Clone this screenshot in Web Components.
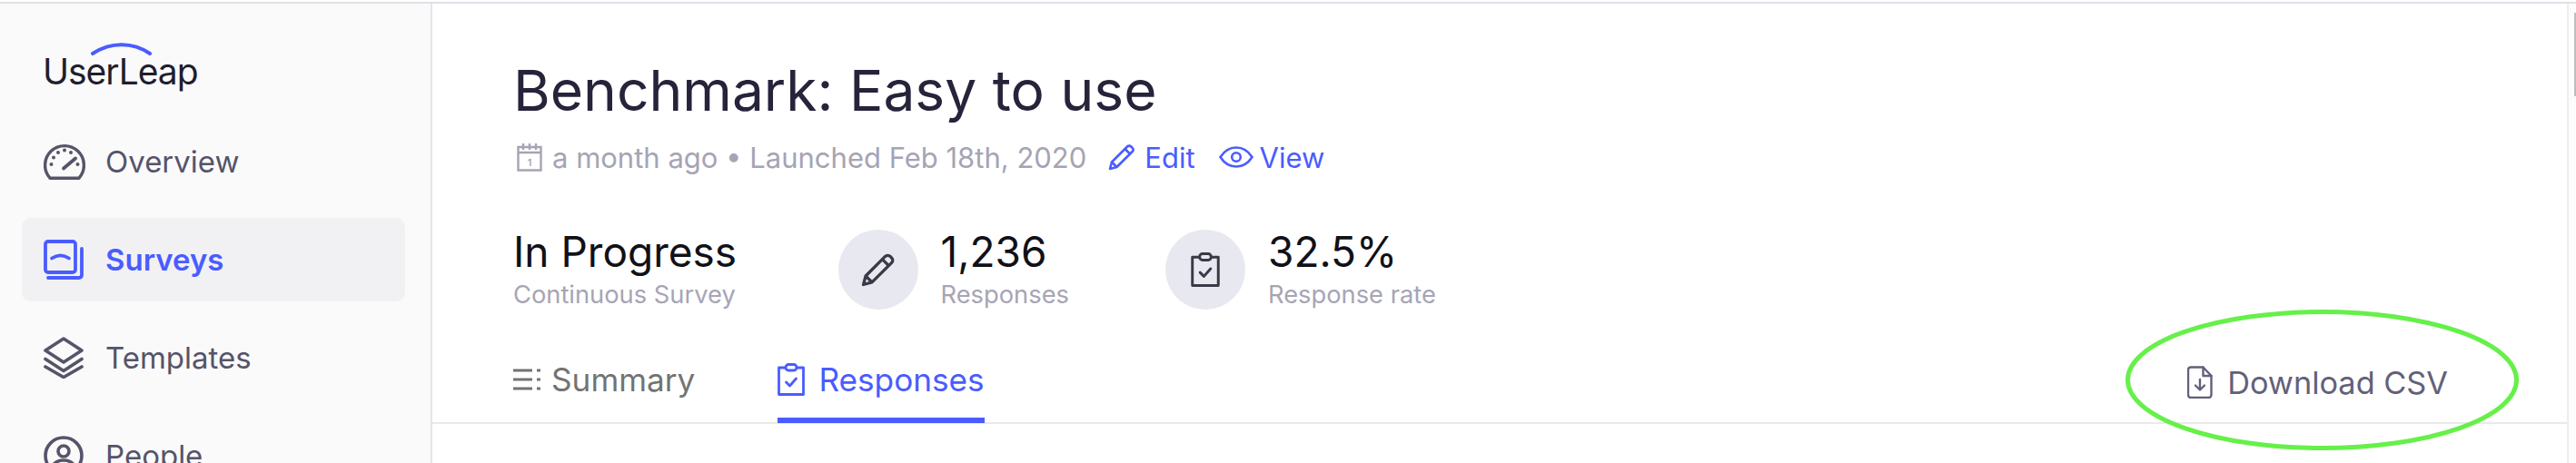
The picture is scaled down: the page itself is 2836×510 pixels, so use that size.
<!DOCTYPE html>
<html>
<head>
<meta charset="utf-8">
<title>Benchmark: Easy to use</title>
<style>
  html, body { margin: 0; height: 510px; overflow: hidden; background: #fff; font-family: Inter, "Liberation Sans", sans-serif; }
</style>
</head>
<body>
<app-shell>
  <side-nav slot="side">
    <nav-item icon="gauge">Overview</nav-item>
    <nav-item icon="surveys" active>Surveys</nav-item>
    <nav-item icon="layers">Templates</nav-item>
    <nav-item icon="person">People</nav-item>
  </side-nav>
  <survey-head>
    <span slot="title">Benchmark: Easy to use</span>
    <span slot="meta">a month ago • Launched Feb 18th, 2020</span>
    <stat-item slot="stats" value="In Progress" label="Continuous Survey"></stat-item>
    <stat-item slot="stats" icon="pencil" value="1,236" label="Responses"></stat-item>
    <stat-item slot="stats" icon="clipboard" value="32.5%" label="Response rate"></stat-item>
  </survey-head>
  <tab-bar>
    <tab-link icon="list">Summary</tab-link>
    <tab-link icon="clipboard" active>Responses</tab-link>
    <download-link slot="end">Download CSV</download-link>
  </tab-bar>
</app-shell>
<script>
  const ICONS = {
    gauge: `<svg width="46" height="40" viewBox="0 0 46 40" fill="none" stroke="currentColor" stroke-width="3.4" stroke-linecap="round"><path d="M7 38.2h32M7 38.2A21.4 21.4 0 1 1 39 38.2"/><path d="M22 27.500L35 16.500" stroke-width="3.800"/><g fill="currentColor" stroke="none"><circle cx="8.500" cy="23" r="2"/><circle cx="11" cy="15.500" r="2"/><circle cx="16" cy="10" r="2"/><circle cx="23" cy="7.500" r="2"/><circle cx="30" cy="10" r="2"/><circle cx="37.500" cy="23" r="2"/></g></svg>`,
    surveys: `<svg width="44" height="44" viewBox="0 0 44 44" fill="none" stroke="currentColor" stroke-width="3.800" stroke-linecap="round" stroke-linejoin="round"><rect x="2" y="2" width="33" height="34" rx="3"/><path d="M42 10v29a3 3 0 0 1-3 3H5"/><path d="M9 20.500c6-4 13-4 19 0"/></svg>`,
    layers: `<svg width="44" height="46" viewBox="0 0 44 46" fill="none" stroke="currentColor" stroke-width="3.600" stroke-linejoin="round" stroke-linecap="round"><path d="M22 2L42 15 22 28 2 15z"/><path d="M2 24.500L22 37.500 42 24.500"/><path d="M2 33L22 44.500 42 33"/></svg>`,
    person: `<svg width="44" height="44" viewBox="0 0 44 44" fill="none" stroke="currentColor" stroke-width="3.600"><circle cx="22" cy="22" r="20"/><circle cx="22" cy="17" r="6"/><path d="M9 36c2-7 7-9 13-9s11 2 13 9"/></svg>`,
    calendar: `<svg width="28" height="32" viewBox="0 0 28 32" fill="none" stroke="currentColor" stroke-width="2.400"><path d="M1.500 5h25v25.500h-25zM1.500 11h25"/><path d="M7 1v7M14 1v7M21 1v7"/><text x="14" y="26" text-anchor="middle" font-family="Inter, sans-serif" font-size="11" font-weight="600" fill="currentColor" stroke="none">1</text></svg>`,
    pencil: `<svg width="30" height="30" viewBox="0 0 30 30" fill="none" stroke="currentColor" stroke-width="2.600" stroke-linejoin="round"><path d="M21 3.500a3 3 0 0 1 4.300 0l1.300 1.300a3 3 0 0 1 0 4.200L9.500 26 2 28l2-7.500z"/><path d="M4 20.500l5.500 5.500M18.500 6l5.500 5.500"/></svg>`,
    eye: `<svg width="38" height="24" viewBox="0 0 38 24" fill="none" stroke="currentColor" stroke-width="2.600"><path d="M1.500 12C6 5 12 1.500 19 1.500S32 5 36.500 12C32 19 26 22.500 19 22.500S6 19 1.500 12z"/><circle cx="19" cy="12" r="4.800"/></svg>`,
    clipboard: `<svg width="30" height="36" viewBox="0 0 30 36" fill="none" stroke="currentColor" stroke-width="2.800" stroke-linejoin="round" stroke-linecap="round"><path d="M9 5H1.500v29.500h27V5H21"/><rect x="9" y="1.500" width="12" height="6.500" rx="3"/><path d="M9.500 21l4 4 7-8"/></svg>`,
    list: `<svg width="32" height="26" viewBox="0 0 32 26" fill="none" stroke="currentColor" stroke-width="2.800"><path d="M1 3h21M1 13h21M1 23h21M27 3h4M27 13h4M27 23h4"/></svg>`,
    file: `<svg width="28" height="36" viewBox="0 0 28 36" fill="none" stroke="currentColor" stroke-width="2.400" stroke-linejoin="round" stroke-linecap="round"><path d="M4 1.500h13.500l9 9.500v21a3 3 0 0 1-3 3H4a3 3 0 0 1-3-3v-28a3 3 0 0 1 3-2.500z"/><path d="M17.500 1.500V11h9"/><path d="M14 15v11M9 21.500l5 5 5-5"/></svg>`
  };

  class AppShell extends HTMLElement {
    connectedCallback() {
      this.attachShadow({ mode: 'open' });
      this.shadowRoot.innerHTML = `
        <style>
          :host { display: block; height: 510px; overflow: hidden; position: relative; }
          .top { height: 2px; margin-top: 2px; background: #e0e0e8; }
          .row { display: flex; height: 506px; }
          .main { flex: 1; min-width: 0; }
          .gutter { width: 8px; border-left: 2px solid #eeeeee; background: #fcfcfc; display: flex; justify-content: flex-end; padding-top: 10px; }
          .thumb { width: 2px; height: 92px; background: #bdbdbd; }
          .mark { position: absolute; left: 2340px; top: 341px; width: 433px; height: 155px; }
        </style>
        <div class="top"></div>
        <div class="row">
          <slot name="side"></slot>
          <div class="main"><slot></slot></div>
          <div class="gutter"><div class="thumb"></div></div>
        </div>
        <svg class="mark" viewBox="0 0 433 155" fill="none"><ellipse cx="216.500" cy="77.500" rx="214" ry="75" stroke="#66f04a" stroke-width="5"/></svg>
      `;
    }
  }

  class SideNav extends HTMLElement {
    connectedCallback() {
      this.attachShadow({ mode: 'open' });
      this.shadowRoot.innerHTML = `
        <style>
          :host { display: block; width: 474px; height: 506px; background: #fafafa; border-right: 2px solid #e4e4ec; flex: none; overflow: hidden; }
          .logo { height: 128px; padding-left: 47px; box-sizing: border-box; position: relative; }
          .word { display: block; padding-top: 50px; font-size: 39px; line-height: 50px; letter-spacing: -1px; color: #1f1e2e; }
          .arc { position: absolute; left: 100px; top: 41px; }
          .items { display: flex; flex-direction: column; gap: 16px; padding: 0 28px 0 24px; }
        </style>
        <div class="logo">
          <svg class="arc" width="68" height="16" viewBox="0 0 68 16" fill="none"><path d="M2 14C22 1 46 1 65 14" stroke="#4a5cff" stroke-width="4" stroke-linecap="round"/></svg>
          <span class="word">UserLeap</span>
        </div>
        <div class="items"><slot></slot></div>
      `;
    }
  }

  class NavItem extends HTMLElement {
    connectedCallback() {
      this.attachShadow({ mode: 'open' });
      this.shadowRoot.innerHTML = `
        <style>
          :host { display: flex; align-items: center; height: 92px; padding-left: 24px; border-radius: 10px; color: #55546a; font-size: 33px; }
          :host([active]) { background: #f1f1f4; color: #4a5cff; font-weight: 600; }
          .ic { width: 46px; display: flex; margin-right: 22px; }
          svg { display: block; }
        </style>
        <span class="ic">${ICONS[this.getAttribute('icon')]}</span><slot></slot>
      `;
    }
  }

  class SurveyHead extends HTMLElement {
    connectedCallback() {
      this.attachShadow({ mode: 'open' });
      this.shadowRoot.innerHTML = `
        <style>
          :host { display: block; height: 331px; box-sizing: border-box; padding: 60px 0 0 89px; }
          h1 { margin: 0; font-size: 62.300px; line-height: 72px; font-weight: 400; color: #26243a; }
          .meta { display: flex; align-items: center; height: 40px; margin-top: 17px; font-size: 31px; color: #a5a4b4; }
          .cal { display: flex; margin: 0 11px 0 4px; }
          .act { display: flex; align-items: center; color: #4a5cff; }
          .edit { margin-left: 24px; }
          .edit svg { margin-right: 10px; }
          .view { margin-left: 26px; }
          .view svg { margin-right: 7px; }
          .stats { display: flex; margin-top: 60px; }
          svg { display: block; }
        </style>
        <h1><slot name="title"></slot></h1>
        <div class="meta">
          <span class="cal">${ICONS.calendar}</span><slot name="meta"></slot>
          <span class="act edit">${ICONS.pencil}Edit</span>
          <span class="act view">${ICONS.eye}View</span>
        </div>
        <div class="stats"><slot name="stats"></slot></div>
      `;
    }
  }

  class StatItem extends HTMLElement {
    connectedCallback() {
      this.attachShadow({ mode: 'open' });
      const icon = this.getAttribute('icon');
      this.shadowRoot.innerHTML = `
        <style>
          :host { display: flex; align-items: center; height: 88px; margin-right: 106px; }
          :host(:not([icon])) { margin-right: 111.400px; }
          .dot { width: 88px; height: 88px; border-radius: 50%; background: #e8e8f0; color: #3a3948; display: flex; align-items: center; justify-content: center; margin-right: 25px; }
          .dot svg { width: 38px; height: 38px; }
          .txt { padding-bottom: 4px; }
          .val { font-size: 46px; line-height: 56px; margin-bottom: 4px; color: #111118; }
          .lab { font-size: 27.300px; line-height: 32px; color: #a6a5b5; white-space: nowrap; }
          svg { display: block; }
        </style>
        ${icon ? `<span class="dot">${ICONS[icon]}</span>` : ''}
        <div class="txt"><div class="val">${this.getAttribute('value')}</div><div class="lab">${this.getAttribute('label')}</div></div>
      `;
    }
  }

  class TabBar extends HTMLElement {
    connectedCallback() {
      this.attachShadow({ mode: 'open' });
      this.shadowRoot.innerHTML = `
        <style>
          :host { display: flex; height: 132px; box-sizing: border-box; border-bottom: 2px solid #e9e9e9; padding-left: 88px; gap: 91px; align-items: flex-end; }
          .end { margin-left: auto; align-self: stretch; display: flex; }
        </style>
        <slot></slot>
        <div class="end"><slot name="end"></slot></div>
      `;
    }
  }

  class TabLink extends HTMLElement {
    connectedCallback() {
      this.attachShadow({ mode: 'open' });
      this.shadowRoot.innerHTML = `
        <style>
          :host { display: flex; align-items: center; height: 90px; box-sizing: border-box; margin-bottom: -1px; border-bottom: 6px solid transparent; color: #737373; font-size: 35.200px; }
          :host([active]) { color: #4a5cff; border-bottom-color: #4a5cff; }
          span { display: flex; margin-right: 11px; }
          :host([active]) span { margin-right: 15px; }
          svg { display: block; }
        </style>
        <span>${ICONS[this.getAttribute('icon')]}</span><slot></slot>
      `;
    }
  }

  class DownloadLink extends HTMLElement {
    connectedCallback() {
      this.attachShadow({ mode: 'open' });
      this.shadowRoot.innerHTML = `
        <style>
          :host { display: flex; align-items: center; height: 100%; padding: 42px 131px 0 0; box-sizing: border-box; color: #62617a; font-size: 34.300px; }
          span { display: flex; margin-right: 16px; }
          svg { display: block; }
        </style>
        <span>${ICONS.file}</span><slot></slot>
      `;
    }
  }

  customElements.define('app-shell', AppShell);
  customElements.define('side-nav', SideNav);
  customElements.define('nav-item', NavItem);
  customElements.define('survey-head', SurveyHead);
  customElements.define('stat-item', StatItem);
  customElements.define('tab-bar', TabBar);
  customElements.define('tab-link', TabLink);
  customElements.define('download-link', DownloadLink);
</script>
</body>
</html>
